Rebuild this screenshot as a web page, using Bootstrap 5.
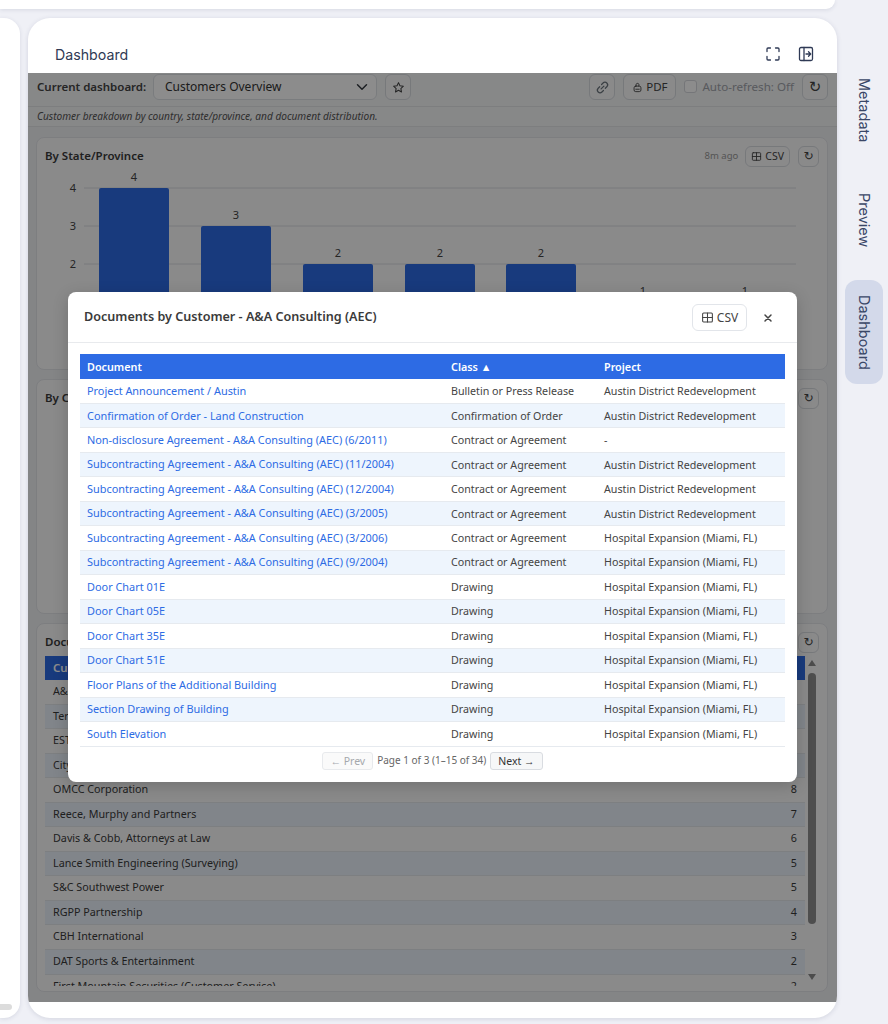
<!DOCTYPE html>
<html>
<head>
  <title>Dashboard</title>
  <link rel="stylesheet" href="https://cdn.jsdelivr.net/npm/bootstrap@5.3.0/dist/css/bootstrap.min.css">
  <style>
    body {
      background: #eff0f6;
      font-family: "Noto Sans", "Open Sans", sans-serif;
      color: #333;
      height: 1024px;
      overflow: hidden;
    }
    svg.ico { fill: none; stroke: currentColor; stroke-width: 1.3; stroke-linecap: round; stroke-linejoin: round; }
    .spin-glyph { font-family: "DejaVu Sans", sans-serif; font-size: 15px; line-height: 1; }

    .top-strip { height: 9px; width: 835px; margin-bottom: 9px; background: #fff; border-radius: 0 0 14px 0; box-shadow: 0 1px 4px rgba(40,50,90,.12); }
    .page-row { height: 1000px; }
    .left-panel { width: 20px; margin-right: 8px; background: #fff; border-radius: 0 16px 16px 0; box-shadow: 0 1px 4px rgba(40,50,90,.12); position: relative; }
    .left-thumb { position: absolute; left: 0; bottom: 8px; width: 12px; height: 6px; background: #dcdcdc; border-radius: 0 3px 3px 0; }

    .main-panel { width: 809px; background: #fff; border-radius: 22px; box-shadow: 0 1px 5px rgba(40,50,90,.14); position: relative; overflow: hidden; }
    .panel-head { height: 55px; padding: 28px 23px 0 27px; color: #2f3a55; }
    .panel-title { font-family: Inter, sans-serif; font-size: 14.2px; line-height: 17px; }
    .head-icons { gap: 17px; }

    .dash-toolbar { height: 34px; padding: 1px 9px 0; background: #f6f7f8; border-bottom: 1px solid #e3e5e8; font-size: 11.5px; }
    .dash-label { font-weight: 600; color: #444; width: 116px; line-height: 26px; }
    .dash-select { width: 224px; height: 26px; padding: 0 28px 0 11px; font-size: 12px; color: #333; border-radius: 6px; background-position: right 6px center; }
    .tool-btn { height: 26px; padding: 0 6px; font-size: 11.5px; line-height: 1; color: #444; background: #fbfbfc; border: 1px solid #d9dce1; border-radius: 6px; display: inline-flex; align-items: center; justify-content: center; gap: 3px; }
    .tool-square { width: 26px; padding: 0; }
    .pdf-btn { width: 53px; }
    .auto-label { font-size: 11.6px; line-height: 26px; color: #a0a4aa; }
    .auto-check { width: 13px; height: 13px; margin: 6px 5px 0 8px; border: 1px solid #d6d8dc; border-radius: 3px; background: #fff; }
    .dash-desc { height: 20px; line-height: 19px; padding: 0 9px; font-size: 10.1px; font-style: italic; color: #555; background: #f6f7f8; border-bottom: 1px solid #e3e5e8; }

    .dash-body { padding: 10px 9px 0 8px; background: #f1f2f5; height: 875px; }
    .chart-card { background: #fbfbfc; border: 1px solid #e4e6ea; border-radius: 8px; margin-bottom: 9px; padding: 7px 8px 0 8px; overflow: hidden; }
    .card-a { height: 233px; }
    .card-b { height: 235px; }
    .card-c { height: 369px; }
    .card-head { height: 22px; }
    .card-title-text { font-size: 11.5px; font-weight: 600; color: #3a3a3a; }
    .ago { font-size: 9.5px; color: #999; margin-right: 7px; }
    .mini-btn { height: 21px; padding: 0 5px; font-size: 10.5px; }
    .mini-square { width: 21px; padding: 0; margin-left: 8px; }
    .mini-btn .spin-glyph { font-size: 12px; }
    .chart-svg { display: block; margin-left: -9px; }
    .chart-svg text { font-family: "Noto Sans", sans-serif; font-size: 11px; fill: #444; text-anchor: middle; }

    .cust-wrap { margin-top: 3px; position: relative; height: 330px; overflow: hidden; }
    .cust-list { width: 760px; }
    .cust-top { height: 24px; background: #2d6be4; color: #fff; font-size: 11.5px; font-weight: 600; line-height: 24px; padding: 0 8px; }
    .cust-row { height: 24.55px; line-height: 23.6px; padding: 0 8px; font-size: 10.75px; color: #3a3a3a; border-bottom: 1px solid #e3e7ec; }
    .cust-row:nth-child(even) { background: #ecf3fb; }
    .cust-scroll { position: absolute; right: 2px; top: 0; bottom: 0; width: 10px; }
    .arrow-up, .arrow-down { position: absolute; left: 1px; width: 0; height: 0; border-left: 4px solid transparent; border-right: 4px solid transparent; }
    .arrow-up { top: 4px; border-bottom: 6px solid #8b8b8b; }
    .arrow-down { bottom: 6px; border-top: 6px solid #8b8b8b; }
    .cust-thumb { position: absolute; left: 1px; top: 17px; width: 8px; height: 251px; background: #8f8f8f; border-radius: 4px; }

    .dim-layer { position: absolute; left: 0; right: 0; top: 55px; bottom: 16px; background: rgba(0,0,0,.45); padding: 219px 40px 0; }
    .doc-modal { height: 490px; background: #fff; border: 0; border-radius: 8px; box-shadow: 0 4px 16px rgba(0,0,0,.18); }
    .doc-modal .modal-header { height: 51px; padding: 1px 16px 0; border-bottom: 1px solid #e8eaed; }
    .doc-modal .modal-title { font-size: 12.6px; font-weight: 600; color: #3a3a3a; }
    .head-csv { width: 55px; height: 27px; font-size: 12px; background: #fff; color: #444; border-color: #e2e5ea; }
    .close-x { width: 14px; height: 14px; color: #444; margin-left: 14px; margin-right: 6px; }
    .doc-modal .modal-body { padding: 11px 12px 0; }

    .doc-table { --bs-table-bg: transparent; table-layout: fixed; width: 705px; margin: 0; font-size: 10.7px; }
    .doc-table th { height: 25px; padding: 1px 7px 0; background: #2d6be4; color: #fff; font-size: 10.8px; font-weight: 600; border: 0; vertical-align: middle; }
    .doc-table td { height: 24.47px; padding: 0 7px; color: #444; border-bottom: 1px solid #e6eaef; vertical-align: middle; white-space: nowrap; overflow: hidden; }
    .doc-table tbody tr:nth-child(even) td { background: #eef5fd; }
    .doc-table a { color: #2d6be4; font-size: 10.9px; text-decoration: none; }

    .pager { margin-top: 5px; font-size: 10px; color: #666; gap: 4px; }
    .page-btn { height: 18px; padding: 0 7px; font-size: 10.5px; line-height: 16px; border: 1px solid #d9dce1; border-radius: 3px; background: #f6f7f8; color: #333; }
    .page-btn:disabled { color: #a5a8ad; background: #fafafa; border-color: #e8eaed; opacity: 1; }

    .side-rail { width: 51px; padding-left: 8px; padding-top: 60px; }
    .rail-tab { width: 38px; writing-mode: vertical-rl; font-family: Inter, sans-serif; font-size: 14.5px; color: #3a4767; line-height: 38px; text-align: center; }
    .tab-meta { height: 64px; margin-bottom: 51px; }
    .tab-prev { height: 54px; margin-bottom: 33px; }
    .tab-dash { height: 104px; background: #d3d9ea; border-radius: 12px; }
  </style>
</head>
<body>
  <svg width="0" height="0" class="position-absolute">
    <symbol id="i-grid" viewBox="0 0 16 16"><rect x="2" y="2.5" width="12" height="11" rx="1.2"/><path d="M2 8h12M8 2.5v11"/></symbol>
    <symbol id="i-star" viewBox="0 0 16 16"><path d="M8 2l1.8 3.900 4.200.5-3.100 2.900.8 4.200L8 11.400l-3.700 2.100.8-4.200L2 6.400l4.200-.5z"/></symbol>
    <symbol id="i-link" viewBox="0 0 16 16"><path d="M6.500 9.500l3-3"/><path d="M7 4.800l1.600-1.600a2.800 2.800 0 0 1 4 4L11 8.800"/><path d="M9 11.200l-1.600 1.600a2.800 2.800 0 0 1-4-4L5 7.200"/></symbol>
    <symbol id="i-pdf" viewBox="0 0 16 16"><rect x="3" y="6" width="10" height="8" rx="2.400"/><path d="M6 6V3.500A2 2 0 0 1 8 2a2 2 0 0 1 2 1.500V6M5.500 10.500h5"/></symbol>
    <symbol id="i-full" viewBox="0 0 16 16"><path d="M2 5.500V3a1 1 0 0 1 1-1h2.500M10.500 2H13a1 1 0 0 1 1 1v2.500M14 10.500V13a1 1 0 0 1-1 1h-2.500M5.500 14H3a1 1 0 0 1-1-1v-2.500"/></symbol>
    <symbol id="i-dock" viewBox="0 0 16 16"><rect x="1.500" y="1.500" width="13" height="13" rx="1.500"/><path d="M6 1.500v13M8 8h4.500M10.500 5.800L12.700 8l-2.200 2.200"/></symbol>
  </svg>

  <div class="top-strip"></div>
  <div class="d-flex page-row">
    <div class="left-panel"><div class="left-thumb"></div></div>

    <div class="main-panel">
      <div class="panel-head d-flex justify-content-between align-items-start">
        <span class="panel-title">Dashboard</span>
        <span class="d-flex head-icons">
          <svg class="ico" width="16" height="16"><use href="#i-full"/></svg>
          <svg class="ico" width="16" height="16"><use href="#i-dock"/></svg>
        </span>
      </div>

      <div class="dash-toolbar d-flex align-items-start">
        <span class="dash-label">Current dashboard:</span>
        <select class="form-select dash-select"><option>Customers Overview</option></select>
        <button class="tool-btn tool-square ms-2"><svg class="ico" width="13" height="13"><use href="#i-star"/></svg></button>
        <button class="tool-btn tool-square ms-auto text-secondary"><svg class="ico" width="15" height="15"><use href="#i-link"/></svg></button>
        <button class="tool-btn pdf-btn ms-2"><svg class="ico" width="11" height="11"><use href="#i-pdf"/></svg>PDF</button>
        <span class="auto-check"></span>
        <span class="auto-label">Auto-refresh: Off</span>
        <button class="tool-btn tool-square ms-2"><span class="spin-glyph">↻</span></button>
      </div>
      <div class="dash-desc">Customer breakdown by country, state/province, and document distribution.</div>

      <div class="dash-body">
        <div class="chart-card card-a">
          <div class="card-head d-flex align-items-center justify-content-between">
            <span class="card-title-text">By State/Province</span>
            <span class="d-flex align-items-center">
              <span class="ago">8m ago</span>
              <button class="tool-btn mini-btn"><svg class="ico" width="11" height="11"><use href="#i-grid"/></svg>CSV</button>
              <button class="tool-btn mini-square mini-btn"><span class="spin-glyph">↻</span></button>
            </span>
          </div>
          <svg class="chart-svg" width="790" height="200">
            <g stroke="#dcdee2">
              <line x1="48" y1="21" x2="760" y2="21"/>
              <line x1="48" y1="59" x2="760" y2="59"/>
              <line x1="48" y1="97" x2="760" y2="97"/>
              <line x1="48" y1="135" x2="760" y2="135"/>
            </g>
            <text x="37" y="25">4</text><text x="37" y="63">3</text><text x="37" y="101">2</text><text x="37" y="139">1</text>
            <g fill="#2d6be4">
              <rect x="63" y="21" width="70" height="170" rx="2"/>
              <rect x="165" y="59" width="70" height="132" rx="2"/>
              <rect x="267" y="97" width="70" height="94" rx="2"/>
              <rect x="369" y="97" width="70" height="94" rx="2"/>
              <rect x="470" y="97" width="70" height="94" rx="2"/>
              <rect x="572" y="135" width="70" height="56" rx="2"/>
              <rect x="674" y="135" width="70" height="56" rx="2"/>
            </g>
            <text x="98" y="14">4</text><text x="200" y="52">3</text><text x="302" y="90">2</text><text x="404" y="90">2</text><text x="505" y="90">2</text><text x="607" y="128">1</text><text x="709" y="128">1</text>
          </svg>
        </div>

        <div class="chart-card card-b">
          <div class="card-head d-flex align-items-center justify-content-between">
            <span class="card-title-text">By Country</span>
            <button class="tool-btn mini-square mini-btn"><span class="spin-glyph">↻</span></button>
          </div>
        </div>

        <div class="chart-card card-c">
          <div class="card-head d-flex align-items-center justify-content-between">
            <span class="card-title-text">Documents by Customer</span>
            <button class="tool-btn mini-square mini-btn"><span class="spin-glyph">↻</span></button>
          </div>
          <div class="cust-wrap">
            <div class="cust-list">
              <div class="cust-top">Customer</div>
              <div>
                <div class="cust-row">A&amp;A Consulting (AEC)</div>
                <div class="cust-row">Ter</div>
                <div class="cust-row">EST</div>
                <div class="cust-row">City</div>
                <div class="cust-row d-flex justify-content-between"><span>OMCC Corporation</span><span>8</span></div>
                <div class="cust-row d-flex justify-content-between"><span>Reece, Murphy and Partners</span><span>7</span></div>
                <div class="cust-row d-flex justify-content-between"><span>Davis &amp; Cobb, Attorneys at Law</span><span>6</span></div>
                <div class="cust-row d-flex justify-content-between"><span>Lance Smith Engineering (Surveying)</span><span>5</span></div>
                <div class="cust-row d-flex justify-content-between"><span>S&amp;C Southwest Power</span><span>5</span></div>
                <div class="cust-row d-flex justify-content-between"><span>RGPP Partnership</span><span>4</span></div>
                <div class="cust-row d-flex justify-content-between"><span>CBH International</span><span>3</span></div>
                <div class="cust-row d-flex justify-content-between"><span>DAT Sports &amp; Entertainment</span><span>2</span></div>
                <div class="cust-row d-flex justify-content-between"><span>First Mountain Securities (Customer Service)</span><span>2</span></div>
              </div>
            </div>
            <div class="cust-scroll">
              <span class="arrow-up"></span>
              <span class="cust-thumb"></span>
              <span class="arrow-down"></span>
            </div>
          </div>
        </div>
      </div>

      <div class="dim-layer">
        <div class="modal-content doc-modal">
          <div class="modal-header">
            <h5 class="modal-title">Documents by Customer - A&amp;A Consulting (AEC)</h5>
            <button class="tool-btn head-csv ms-auto"><svg class="ico" width="13" height="13"><use href="#i-grid"/></svg>CSV</button>
            <svg class="ico close-x" viewBox="0 0 14 14"><path d="M4 4l6 6M10 4l-6 6" stroke-width="1.500"/></svg>
          </div>
          <div class="modal-body">
            <table class="table doc-table">
              <colgroup><col style="width:364px"><col style="width:153px"><col style="width:188px"></colgroup>
              <thead><tr><th>Document</th><th>Class ▲</th><th>Project</th></tr></thead>
              <tbody>
                <tr><td><a href="#">Project Announcement / Austin</a></td><td>Bulletin or Press Release</td><td>Austin District Redevelopment</td></tr>
                <tr><td><a href="#">Confirmation of Order - Land Construction</a></td><td>Confirmation of Order</td><td>Austin District Redevelopment</td></tr>
                <tr><td><a href="#">Non-disclosure Agreement - A&amp;A Consulting (AEC) (6/2011)</a></td><td>Contract or Agreement</td><td>-</td></tr>
                <tr><td><a href="#">Subcontracting Agreement - A&amp;A Consulting (AEC) (11/2004)</a></td><td>Contract or Agreement</td><td>Austin District Redevelopment</td></tr>
                <tr><td><a href="#">Subcontracting Agreement - A&amp;A Consulting (AEC) (12/2004)</a></td><td>Contract or Agreement</td><td>Austin District Redevelopment</td></tr>
                <tr><td><a href="#">Subcontracting Agreement - A&amp;A Consulting (AEC) (3/2005)</a></td><td>Contract or Agreement</td><td>Austin District Redevelopment</td></tr>
                <tr><td><a href="#">Subcontracting Agreement - A&amp;A Consulting (AEC) (3/2006)</a></td><td>Contract or Agreement</td><td>Hospital Expansion (Miami, FL)</td></tr>
                <tr><td><a href="#">Subcontracting Agreement - A&amp;A Consulting (AEC) (9/2004)</a></td><td>Contract or Agreement</td><td>Hospital Expansion (Miami, FL)</td></tr>
                <tr><td><a href="#">Door Chart 01E</a></td><td>Drawing</td><td>Hospital Expansion (Miami, FL)</td></tr>
                <tr><td><a href="#">Door Chart 05E</a></td><td>Drawing</td><td>Hospital Expansion (Miami, FL)</td></tr>
                <tr><td><a href="#">Door Chart 35E</a></td><td>Drawing</td><td>Hospital Expansion (Miami, FL)</td></tr>
                <tr><td><a href="#">Door Chart 51E</a></td><td>Drawing</td><td>Hospital Expansion (Miami, FL)</td></tr>
                <tr><td><a href="#">Floor Plans of the Additional Building</a></td><td>Drawing</td><td>Hospital Expansion (Miami, FL)</td></tr>
                <tr><td><a href="#">Section Drawing of Building</a></td><td>Drawing</td><td>Hospital Expansion (Miami, FL)</td></tr>
                <tr><td><a href="#">South Elevation</a></td><td>Drawing</td><td>Hospital Expansion (Miami, FL)</td></tr>
              </tbody>
            </table>
            <div class="pager d-flex justify-content-center align-items-center">
              <button class="page-btn" disabled>← Prev</button>
              <span>Page 1 of 3 (1–15 of 34)</span>
              <button class="page-btn">Next →</button>
            </div>
          </div>
        </div>
      </div>
    </div>

    <div class="side-rail">
      <div class="rail-tab tab-meta">Metadata</div>
      <div class="rail-tab tab-prev">Preview</div>
      <div class="rail-tab tab-dash">Dashboard</div>
    </div>
  </div>

  <script src="https://cdn.jsdelivr.net/npm/bootstrap@5.3.0/dist/js/bootstrap.bundle.min.js"></script>
</body>
</html>
